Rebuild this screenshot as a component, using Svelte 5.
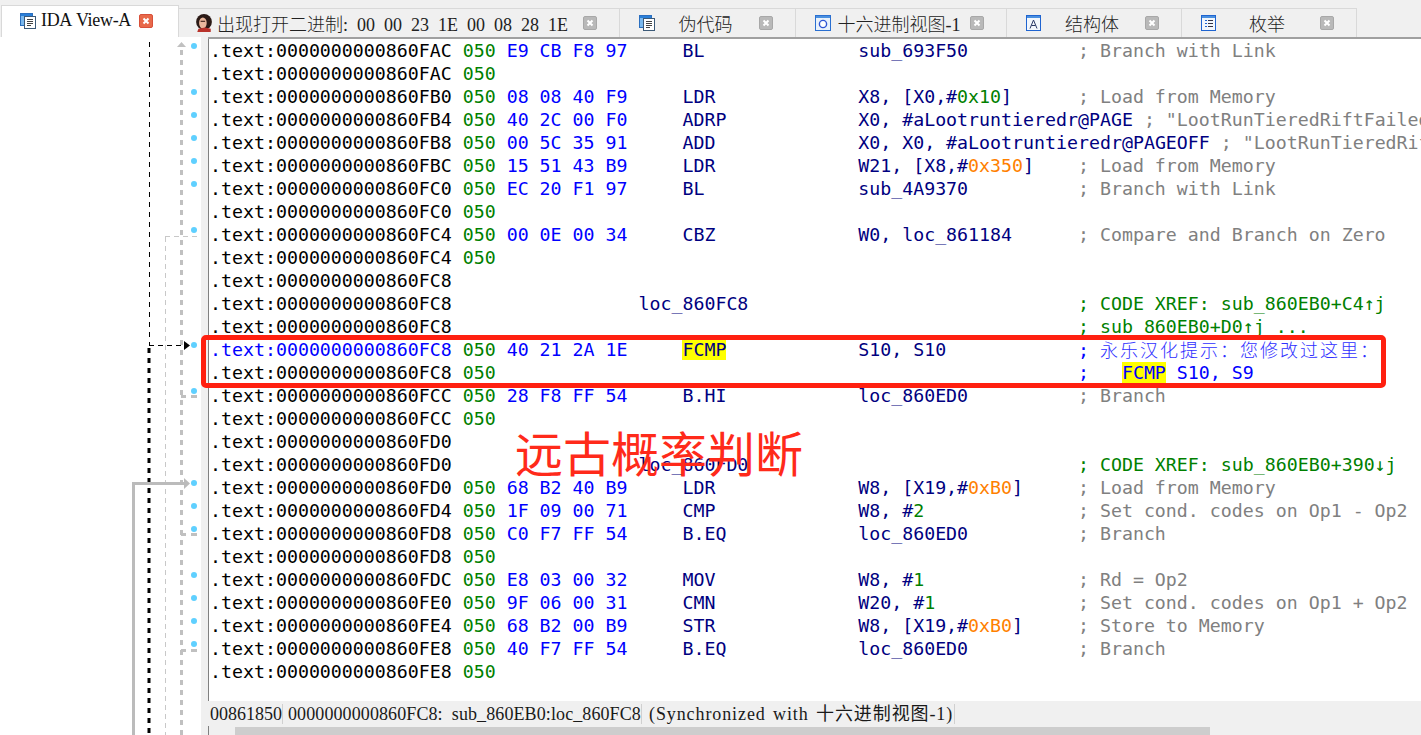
<script>
  const tabs = [
    { label: 'IDA View-A', icon: 'doc', width: 178, active: true },
    { label: '出现打开二进制: 00 00 23 1E 00 08 28 1E', icon: 'avatar', width: 441 },
    { label: '伪代码', icon: 'doc', width: 176 },
    { label: '十六进制视图-1', icon: 'hex', width: 211 },
    { label: '结构体', icon: 'struct', width: 175 },
    { label: '枚举', icon: 'enum', width: 175 }
  ];

  const PRE = '0000000000860';

  // addr, bytes, mnemonic, operands, comment
  const rows = [
    { a: 'FAC', b: 'E9 CB F8 97', m: 'BL', o: [['sub_693F50']], c: '; Branch with Link' },
    { a: 'FAC', sp: 1 },
    { a: 'FB0', b: '08 08 40 F9', m: 'LDR', o: [['X8, [X0,#'], ['0x10', 'num'], [']']], c: '; Load from Memory' },
    { a: 'FB4', b: '40 2C 00 F0', m: 'ADRP', o: [['X0, #aLootruntieredr@PAGE']], c: '; "LootRunTieredRiftFailed' },
    { a: 'FB8', b: '00 5C 35 91', m: 'ADD', o: [['X0, X0, #aLootruntieredr@PAGEOFF']], c: '; "LootRunTieredRif' },
    { a: 'FBC', b: '15 51 43 B9', m: 'LDR', o: [['W21, [X8,#'], ['0x350', 'off'], [']']], c: '; Load from Memory' },
    { a: 'FC0', b: 'EC 20 F1 97', m: 'BL', o: [['sub_4A9370']], c: '; Branch with Link' },
    { a: 'FC0', sp: 1 },
    { a: 'FC4', b: '00 0E 00 34', m: 'CBZ', o: [['W0, loc_861184']], c: '; Compare and Branch on Zero' },
    { a: 'FC4', sp: 1 },
    { a: 'FC8' },
    { a: 'FC8', label: 'loc_860FC8', c: '; CODE XREF: sub_860EB0+C4↑j', xref: true },
    { a: 'FC8', c: '; sub_860EB0+D0↑j ...', xref: true },
    { a: 'FC8', b: '40 21 2A 1E', m: 'FCMP', o: [['S10, S10']], hit: true, note: '永乐汉化提示\uFF1A您修改过这里\uFF1A' },
    { a: 'FC8', sp: 1, patch: 'S10, S9' },
    { a: 'FCC', b: '28 F8 FF 54', m: 'B.HI', o: [['loc_860ED0']], c: '; Branch' },
    { a: 'FCC', sp: 1 },
    { a: 'FD0' },
    { a: 'FD0', label: 'loc_860FD0', c: '; CODE XREF: sub_860EB0+390↓j', xref: true },
    { a: 'FD0', b: '68 B2 40 B9', m: 'LDR', o: [['W8, [X19,#'], ['0xB0', 'off'], [']']], c: '; Load from Memory' },
    { a: 'FD4', b: '1F 09 00 71', m: 'CMP', o: [['W8, #'], ['2', 'num']], c: '; Set cond. codes on Op1 - Op2' },
    { a: 'FD8', b: 'C0 F7 FF 54', m: 'B.EQ', o: [['loc_860ED0']], c: '; Branch' },
    { a: 'FD8', sp: 1 },
    { a: 'FDC', b: 'E8 03 00 32', m: 'MOV', o: [['W8, #'], ['1', 'num']], c: '; Rd = Op2' },
    { a: 'FE0', b: '9F 06 00 31', m: 'CMN', o: [['W20, #'], ['1', 'num']], c: '; Set cond. codes on Op1 + Op2' },
    { a: 'FE4', b: '68 B2 00 B9', m: 'STR', o: [['W8, [X19,#'], ['0xB0', 'off'], [']']], c: '; Store to Memory' },
    { a: 'FE8', b: '40 F7 FF 54', m: 'B.EQ', o: [['loc_860ED0']], c: '; Branch' },
    { a: 'FE8', sp: 1 }
  ];

  // one dot per row that holds an instruction, 5px above the row centre
  const dots = rows
    .map((r, i) => (r.b ? 46 + i * 23 : null))
    .filter((y) => y !== null);

  const stubs = [396.5, 534.5, 650.5];
</script>

<div class="page">
  <div class="tabs">
    {#each tabs as tab}
      <div class="tab" class:active={tab.active} class:hexdump={tab.icon === 'avatar'} style:width="{tab.width}px">
        <svg class="icon" class:big={tab.icon === 'avatar'} viewBox="0 0 16 16">
          {#if tab.icon === 'doc'}
            <rect x="0.5" y="0.5" width="12" height="12" fill="#7ab8ee" stroke="#2a6fc0" />
            <rect x="1" y="1" width="11" height="2" fill="#2a7fd8" />
            <rect x="4.5" y="3.5" width="11" height="12" fill="#fff" stroke="#3c5a78" />
            <path d="M7 6.5h6M7 8.5h6M7 10.5h6M7 12.5h4" stroke="#444" fill="none" />
          {:else if tab.icon === 'avatar'}
            <ellipse cx="8" cy="7" rx="7" ry="7" fill="#2b1a16" />
            <ellipse cx="7" cy="8" rx="3.4" ry="5" fill="#eab79c" />
            <path d="M2 16 L3 13 L9 12 L14 13 L14 16 Z" fill="#b8322a" />
            <rect x="5" y="6" width="4" height="1" fill="#40241c" />
          {:else if tab.icon === 'hex'}
            <rect x="0.5" y="0.5" width="15" height="15" fill="#e8f1fb" stroke="#2a6fd0" />
            <rect x="1" y="1" width="14" height="2" fill="#4a90e0" />
            <circle cx="8" cy="9" r="3.6" fill="#fff" stroke="#2f55d4" stroke-width="1.4" />
          {:else if tab.icon === 'struct'}
            <rect x="0.5" y="0.5" width="14" height="15" fill="#f2f7fd" stroke="#1f64d0" />
            <rect x="1" y="1" width="13" height="2" fill="#4a90e0" />
            <path d="M4 13.5 L7.5 5 L11 13.5 M5.5 10.5 H9.5" stroke="#2b3a66" fill="none" />
          {:else}
            <rect x="0.5" y="0.5" width="14" height="15" fill="#f2f7fd" stroke="#1f64d0" />
            <rect x="1" y="1" width="13" height="2" fill="#4a90e0" />
            <path d="M4 5.5h2M4 8.5h2M4 11.5h2" stroke="#1f64d0" />
            <path d="M7 5.5h5M7 8.5h5M7 11.5h5" stroke="#334" />
          {/if}
        </svg>
        <span class="label">{tab.label}</span>
        <svg class="close" viewBox="0 0 14 14" width="14" height="14">
          <rect x="0.5" y="0.5" width="13" height="13" rx="1.5" class="close-bg" />
          <path d="M4.5 4.5 L9.5 9.5 M9.5 4.5 L4.5 9.5" stroke="#fff" stroke-width="2" />
        </svg>
      </div>
    {/each}
  </div>

  <div class="main">
    <div class="gutter">
      <div class="graph">
        <svg viewBox="0 37 201 698" width="201" height="698">
          <path d="M149.5 42V345" stroke="#000" stroke-dasharray="5 5" fill="none" />
          <path d="M149 348V735" stroke="#000" stroke-width="3" stroke-dasharray="5 5" fill="none" />
          <path d="M149 345.5H185" stroke="#000" stroke-dasharray="5 4" fill="none" />
          <path d="M184 341 L190 345.5 L184 350 Z" fill="#000" />

          <path d="M181.5 50V735" stroke="#c0c0c0" stroke-width="3" stroke-dasharray="5 5" fill="none" />
          <path d="M177 47 L181.5 42 L186 47 Z" fill="#c0c0c0" />
          <path d="M165.5 237V735M165 236.5H197" stroke="#c8c8c8" stroke-dasharray="5 4" fill="none" />

          <path d="M133.5 735V483.5H185" stroke="#bbb" stroke-width="3" fill="none" />
          <path d="M184 478 L190 483.5 L184 489 Z" fill="#bbb" />

          {#each stubs as y}
            <path d="M181 {y}H186M191 {y}H197" stroke="#c0c0c0" stroke-width="3" fill="none" />
          {/each}
          {#each dots as y}
            <circle cx="194" cy={y} r="3" fill="#5fd0ff" />
          {/each}
        </svg>
      </div>
      <div class="strip"></div>
    </div>

    <div class="view">
      <div class="listing">
        {#each rows as r}
          <div class="row">
            <span class="addr" class:cur={r.hit}>.text:{PRE}{r.a}</span>
            <span class="sp">{r.b || r.sp ? '050' : ''}</span>
            <span class="bytes">{r.b ?? ''}</span>
            <span class="lab">{r.label ?? ''}</span>
            <span class="mn">{#if r.hit}<mark>{r.m}</mark>{:else}{r.m ?? ''}{/if}</span>
            <span class="ops">{#each r.o ?? [] as [t, k]}<span class={k}>{t}</span>{/each}</span>
            {#if r.note}
              <span class="patch">{'; '}<span class="cjk">{r.note}</span></span>
            {:else if r.patch}
              <span class="patch">{';   '}<mark>FCMP</mark>{' ' + r.patch}</span>
            {:else if r.c}
              <span class="cmt" class:xref={r.xref}>{r.c}</span>
            {/if}
          </div>
        {/each}
      </div>
      <div class="status">
        <span class="cell first">00861850</span>
        <span class="cell second">0000000000860FC8: sub_860EB0:loc_860FC8</span>
        <span class="cell third">(Synchronized with 十六进制视图-1)</span>
      </div>
      <div class="scroll"><div class="thumb"></div></div>
    </div>
  </div>

  <div class="redbox"></div>
  <div class="stamp">远古概率判断</div>
</div>

<style>
  :global(body) {
    margin: 0;
    background: #fff;
  }

  .page {
    position: relative;
    width: 1421px;
    height: 735px;
    overflow: hidden;
    display: flex;
    flex-direction: column;
    font-family: "Liberation Serif", "Noto Sans CJK SC", serif;
  }

  .tabs {
    display: flex;
    align-items: flex-end;
    height: 37px;
    flex: none;
    padding-left: 1px;
    background: #f0f0f0;
  }

  .tab {
    display: flex;
    align-items: center;
    box-sizing: border-box;
    height: 29px;
    padding: 0 22px 0 19px;
    border-top: 1px solid #d9d9d9;
    border-right: 1px solid #d9d9d9;
    background: #f0f0f0;
    color: #222;
    font-size: 18px;
    font-weight: 300;
    word-spacing: 4.5px;
  }

  .tab.active {
    position: relative;
    height: 32px;
    padding-left: 18px;
    padding-right: 25px;
    padding-bottom: 2px;
    border-left: 1px solid #d9d9d9;
    background: #fff;
    color: #111;
    letter-spacing: -0.3px;
    word-spacing: 1px;
  }

  .icon {
    flex: none;
    width: 16px;
    height: 16px;
  }

  .icon.big {
    width: 18px;
    height: 18px;
    margin-left: -3px;
  }

  .label {
    flex: 1;
    text-align: center;
    white-space: nowrap;
    padding-right: 3px;
  }

  .hexdump .label {
    padding-right: 11px;
  }

  .close {
    flex: none;
  }

  .close-bg {
    fill: #b9b9b9;
    stroke: #a8a8a8;
  }

  .active .close-bg {
    fill: #e8694a;
    stroke: #d8503a;
  }

  .main {
    flex: 1;
    display: flex;
    min-height: 0;
  }

  .gutter {
    flex: 0 0 208px;
    display: flex;
    background: #fff;
  }

  .graph {
    flex: 1;
    position: relative;
  }

  .graph svg {
    position: absolute;
    left: 0;
    top: 0;
  }

  .strip {
    flex: 0 0 7px;
    background: #f0f0f0;
  }

  .view {
    flex: 1;
    min-width: 0;
    display: flex;
    flex-direction: column;
    border-top: 2px solid #a0a0a0;
  }

  .listing {
    flex: 1;
    min-height: 0;
    padding: 0 0 0 1px;
    border-left: 1px solid #808080;
    font-family: "DejaVu Sans Mono", monospace;
    font-size: 18.25px;
    color: #000;
  }

  .row {
    display: flex;
    height: 23px;
    line-height: 23px;
    white-space: pre;
    overflow: hidden;
  }

  .row > span {
    flex: none;
  }

  .addr {
    width: 23ch;
  }

  .addr.cur {
    color: #0000ff;
  }

  .sp {
    width: 4ch;
    color: #008000;
  }

  .bytes {
    width: 12ch;
    color: #0000ff;
  }

  .lab {
    width: 4ch;
    color: #000080;
  }

  .mn {
    width: 16ch;
    color: #000080;
  }

  .ops {
    min-width: 19ch;
    margin-right: 1ch;
    color: #000080;
  }

  .num {
    color: #008000;
  }

  .off {
    color: #ff8000;
  }

  .cmt {
    color: #808080;
  }

  .cmt.xref {
    color: #008000;
  }

  .patch {
    color: #0000ff;
  }

  .cjk {
    font-family: "Noto Sans CJK SC", sans-serif;
    font-size: 18px;
    font-weight: 300;
    letter-spacing: 2px;
    color: #3030ff;
  }

  mark {
    background: #ffff00;
    color: inherit;
  }

  .status {
    flex: none;
    display: flex;
    align-items: center;
    height: 25px;
    background: #f0f0f0;
    font-size: 18px;
    color: #1a1a1a;
    word-spacing: 4.5px;
    white-space: nowrap;
  }

  .cell {
    box-sizing: border-box;
    height: 20px;
    line-height: 20px;
    padding-left: 2px;
    border-right: 1px solid #d0d0d0;
  }

  .first {
    width: 75px;
  }

  .second {
    width: 359px;
    padding-left: 5px;
    letter-spacing: 0.1px;
  }

  .third {
    width: 313px;
    padding-left: 7px;
    letter-spacing: 0.9px;
    word-spacing: 2px;
  }

  .scroll {
    flex: none;
    height: 8px;
    padding: 1px 0 0 26px;
    border-left: 1px solid #808080;
    background: #f0f0f0;
  }

  .thumb {
    width: 975px;
    height: 8px;
    background: #cdcdcd;
  }

  .redbox {
    position: absolute;
    left: 201px;
    top: 335px;
    box-sizing: border-box;
    width: 1185px;
    height: 53px;
    border: 5px solid #ff2010;
    border-radius: 5px;
  }

  .stamp {
    position: absolute;
    left: 515px;
    top: 425px;
    font-family: "Noto Sans CJK SC", sans-serif;
    font-size: 48px;
    line-height: 52px;
    color: #ff2a1a;
    white-space: nowrap;
  }
</style>
